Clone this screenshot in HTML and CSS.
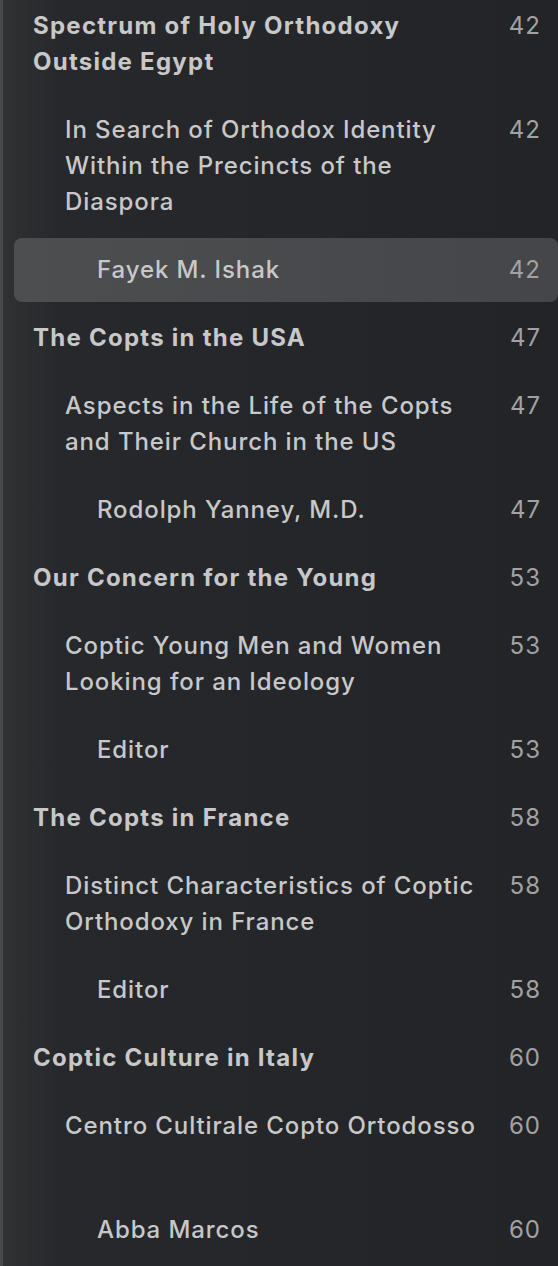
FILE: index.html
```html
<!DOCTYPE html>
<html lang="en">
<head>
    <meta charset="UTF-8">
    <meta name="viewport" content="width=device-width, initial-scale=1.0">
    <title>Contents</title>
    <link rel="stylesheet" href="styles.css">
</head>
<body>
    <nav class="toc">
        <div class="entry lvl0"><span class="title">Spectrum of Holy Orthodoxy Outside Egypt</span><span class="page">42</span></div>
        <div class="entry lvl1"><span class="title">In Search of Orthodox Identity Within the Precincts of the Diaspora</span><span class="page">42</span></div>
        <div class="entry lvl2 current"><span class="title">Fayek M. Ishak</span><span class="page">42</span></div>
        <div class="entry lvl0"><span class="title">The Copts in the USA</span><span class="page">47</span></div>
        <div class="entry lvl1"><span class="title">Aspects in the Life of the Copts and Their Church in the US</span><span class="page">47</span></div>
        <div class="entry lvl2"><span class="title">Rodolph Yanney, M.D.</span><span class="page">47</span></div>
        <div class="entry lvl0"><span class="title">Our Concern for the Young</span><span class="page">53</span></div>
        <div class="entry lvl1"><span class="title">Coptic Young Men and Women Looking for an Ideology</span><span class="page">53</span></div>
        <div class="entry lvl2"><span class="title">Editor</span><span class="page">53</span></div>
        <div class="entry lvl0"><span class="title">The Copts in France</span><span class="page">58</span></div>
        <div class="entry lvl1"><span class="title">Distinct Characteristics of Coptic Orthodoxy in France</span><span class="page">58</span></div>
        <div class="entry lvl2"><span class="title">Editor</span><span class="page">58</span></div>
        <div class="entry lvl0"><span class="title">Coptic Culture in Italy</span><span class="page">60</span></div>
        <div class="entry lvl1"><span class="title">Centro Cultirale Copto Ortodosso<br>&nbsp;</span><span class="page">60</span></div>
        <div class="entry lvl2"><span class="title">Abba Marcos</span><span class="page">60</span></div>
    </nav>
</body>
</html>
```

FILE: styles.css
```css
html, body { height: 100%; }
body {
    margin: 0;
    overflow: hidden;
    font-family: Inter, "Noto Sans", sans-serif;
    font-size: 24px;
    letter-spacing: 0.9px;
    color: #c8c8c9;
    background: linear-gradient(90deg, #48494b 0, #48494b 3px, #303133 3px, #27282b 60px, #232427 100%);
}
.toc { margin-top: -10px; padding-left: 14px; }
.entry {
    display: flex;
    align-items: flex-start;
    gap: 14px;
    margin: 4px 0;
    padding: 14px 17px 14px 19px;
    line-height: 36px;
    border-radius: 8px;
}
.title { flex: 1; }
.page { color: #a2a2a4; letter-spacing: 1px; }
.lvl0 .title { font-weight: 700; letter-spacing: 1.25px; }
.lvl1 .title { padding-left: 32px; font-weight: 500; }
.lvl2 .title { padding-left: 64px; font-weight: 500; }
.current { background: linear-gradient(90deg, #4d4e50, #454649); }
```
